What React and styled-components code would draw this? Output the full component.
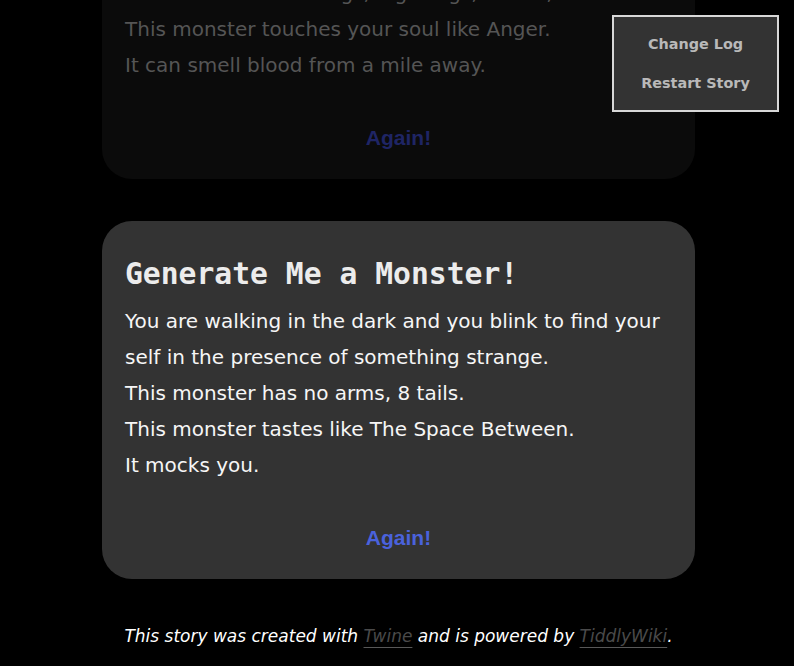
import React from "react";
import styled, { createGlobalStyle } from "styled-components";

const GlobalStyle = createGlobalStyle`
  html, body {
    margin: 0;
    padding: 0;
    background: #000;
    overflow: hidden;
  }
`;

const Page = styled.div`
  display: flex;
  flex-direction: column;
  gap: 42px;
  width: 593px;
  margin-left: 102px;
  margin-top: -179px;
`;

const Passage = styled.section`
  display: flex;
  flex-direction: column;
  background: ${(p) => (p.$faded ? "#0b0b0b" : "#333333")};
  border-radius: 30px;
  padding: 35px 12px 29px 23px;
  color: ${(p) => (p.$faded ? "#555555" : "#f6f6f6")};
`;

const Title = styled.h1`
  margin: 0 0 12px;
  font-family: "DejaVu Sans Mono", "Liberation Mono", monospace;
  font-weight: bold;
  font-size: 29.7px;
  line-height: 35px;
  color: ${(p) => (p.$faded ? "#555555" : "#ececec")};
`;

const Line = styled.p`
  margin: 0;
  font-family: "DejaVu Sans", Verdana, sans-serif;
  font-size: 20px;
  line-height: 36px;
`;

const Again = styled.a`
  display: block;
  align-self: center;
  margin: 43px 11px 0 0;
  font-family: "Liberation Sans", Arial, sans-serif;
  font-weight: bold;
  font-size: 21px;
  line-height: 24px;
  color: ${(p) => (p.$faded ? "#1f2565" : "#4a62dc")};
  text-decoration: none;
  cursor: pointer;
`;

const Footer = styled.p`
  margin: 3px 0 0;
  text-align: center;
  font-family: "DejaVu Sans", Verdana, sans-serif;
  font-style: italic;
  font-size: 17px;
  line-height: 24px;
  color: #ffffff;
`;

const FooterLink = styled.a`
  color: #4a4a4a;
  text-decoration: underline;
  text-decoration-color: #585858;
  text-decoration-thickness: 2px;
  text-underline-offset: 5px;
`;

const Menu = styled.nav`
  position: fixed;
  top: 15px;
  right: 15px;
  width: 163px;
  height: 93px;
  box-sizing: content-box;
  border: 2px solid #d8d8d8;
  background: #333333;
  display: flex;
  flex-direction: column;
  align-items: center;
  justify-content: center;
  gap: 17px;
`;

const MenuItem = styled.a`
  font-family: "DejaVu Sans", Tahoma, sans-serif;
  font-weight: bold;
  font-size: 14.4px;
  line-height: 22px;
  color: #b9b9b9;
  cursor: pointer;
`;

const passages = [
  {
    faded: true,
    title: "Generate Me a Monster!",
    lines: [
      "You are walking in the dark and you blink to find your self in the presence of something strange.",
      "This monster has 2 legs, big wings, 4 ears,",
      "This monster touches your soul like Anger.",
      "It can smell blood from a mile away.",
    ],
  },
  {
    faded: false,
    title: "Generate Me a Monster!",
    lines: [
      "You are walking in the dark and you blink to find your self in the presence of something strange.",
      "This monster has no arms, 8 tails.",
      "This monster tastes like The Space Between.",
      "It mocks you.",
    ],
  },
];

export default function App() {
  return (
    <>
      <GlobalStyle />
      <Page>
        {passages.map((p, i) => (
          <Passage key={i} $faded={p.faded}>
            <Title $faded={p.faded}>{p.title}</Title>
            {p.lines.map((l, j) => (
              <Line key={j}>{l}</Line>
            ))}
            <Again $faded={p.faded}>Again!</Again>
          </Passage>
        ))}
        <Footer>
          This story was created with <FooterLink>Twine</FooterLink> and is
          powered by <FooterLink>TiddlyWiki</FooterLink>.
        </Footer>
      </Page>
      <Menu>
        <MenuItem>Change Log</MenuItem>
        <MenuItem>Restart Story</MenuItem>
      </Menu>
    </>
  );
}
